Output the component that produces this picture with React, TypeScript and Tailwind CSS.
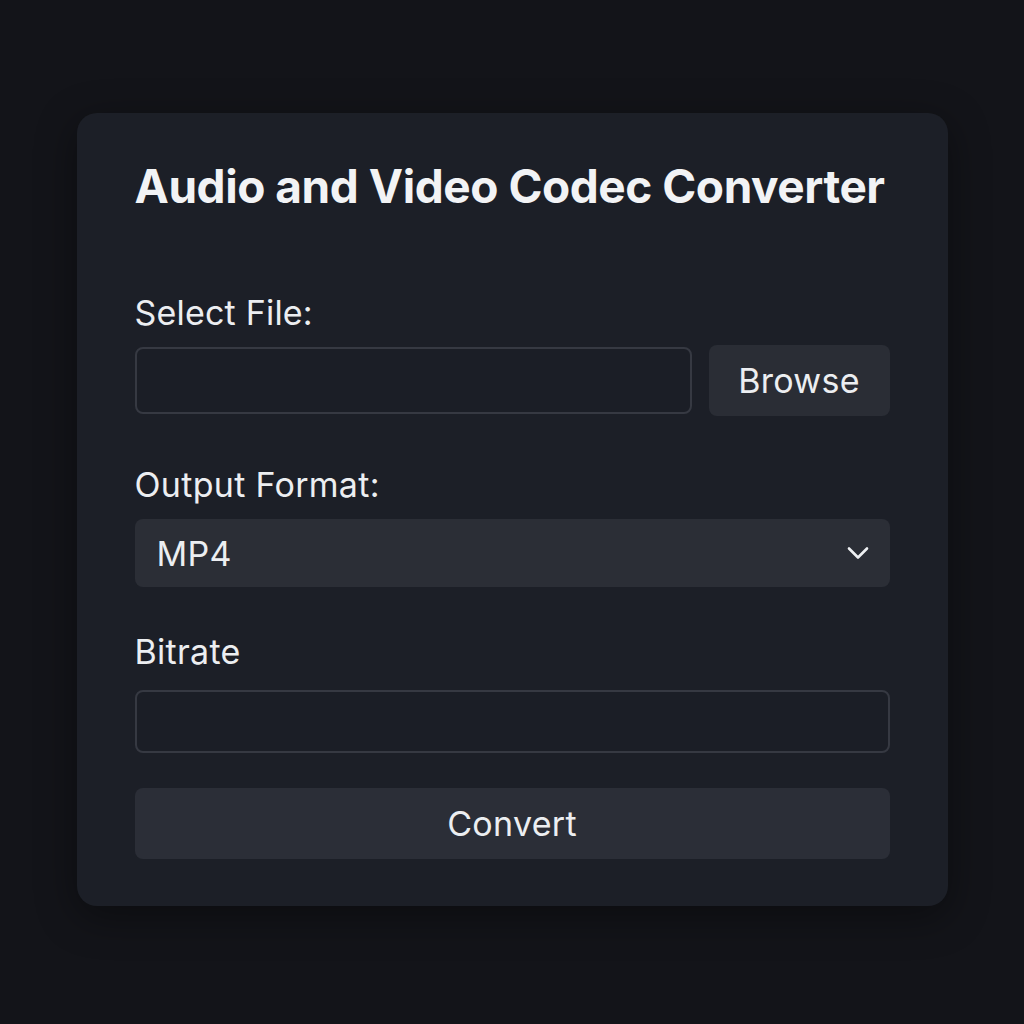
export default function App() {
    return (
        <div className="min-h-screen w-full bg-[#131419] flex items-start justify-center pt-[113px] font-['Inter',sans-serif]">
            <div className="w-[871px] h-[793px] rounded-[20px] bg-[#1c1f27] px-[58px] pt-[47px] shadow-[0_10px_40px_rgba(0,0,0,0.4)]">
                <h1 className="text-[46px] font-bold text-[#f2f3f5] leading-[52px] tracking-[-0.45px] whitespace-nowrap">
                    Audio and Video Codec Converter
                </h1>

                {/* Select file */}
                <div className="mt-[81px] text-[34px] text-[#eceef1] leading-[40px] tracking-[0.2px]">Select File:</div>
                <div className="mt-[12px] flex items-center gap-[17px]">
                    <div className="h-[67px] flex-1 rounded-[8px] border-2 border-[#363942] bg-[#1b1e26]" />
                    <button className="h-[71px] w-[181px] rounded-[8px] bg-[#2a2d35] text-[34px] text-[#eceef1] tracking-[0.3px]">
                        Browse
                    </button>
                </div>

                {/* Output format */}
                <div className="mt-[49px] text-[34px] text-[#eceef1] leading-[40px] tracking-[0.3px]">Output Format:</div>
                <div className="mt-[14px] h-[68px] rounded-[8px] bg-[#2b2e36] flex items-center justify-between pl-[22px] pr-[21px]">
                    <span className="text-[34px] text-[#eceef1] tracking-[0.3px]">MP4</span>
                    <svg width="22" height="14" viewBox="0 0 22 14" fill="none" stroke="#eef0f3" strokeWidth="2.6" strokeLinecap="round" strokeLinejoin="round">
                        <path d="M2 2.5 L11 11.5 L20 2.5" />
                    </svg>
                </div>

                {/* Bitrate */}
                <div className="mt-[45px] text-[34px] text-[#eceef1] leading-[40px] tracking-[0.3px]">Bitrate</div>
                <div className="mt-[18px] h-[63px] rounded-[8px] border-2 border-[#363942] bg-[#1b1e26]" />

                <button className="mt-[35px] h-[71px] w-full rounded-[8px] bg-[#2b2e37] text-[34px] text-[#eceef1] tracking-[0.3px]">
                    Convert
                </button>
            </div>
        </div>
    )
}
